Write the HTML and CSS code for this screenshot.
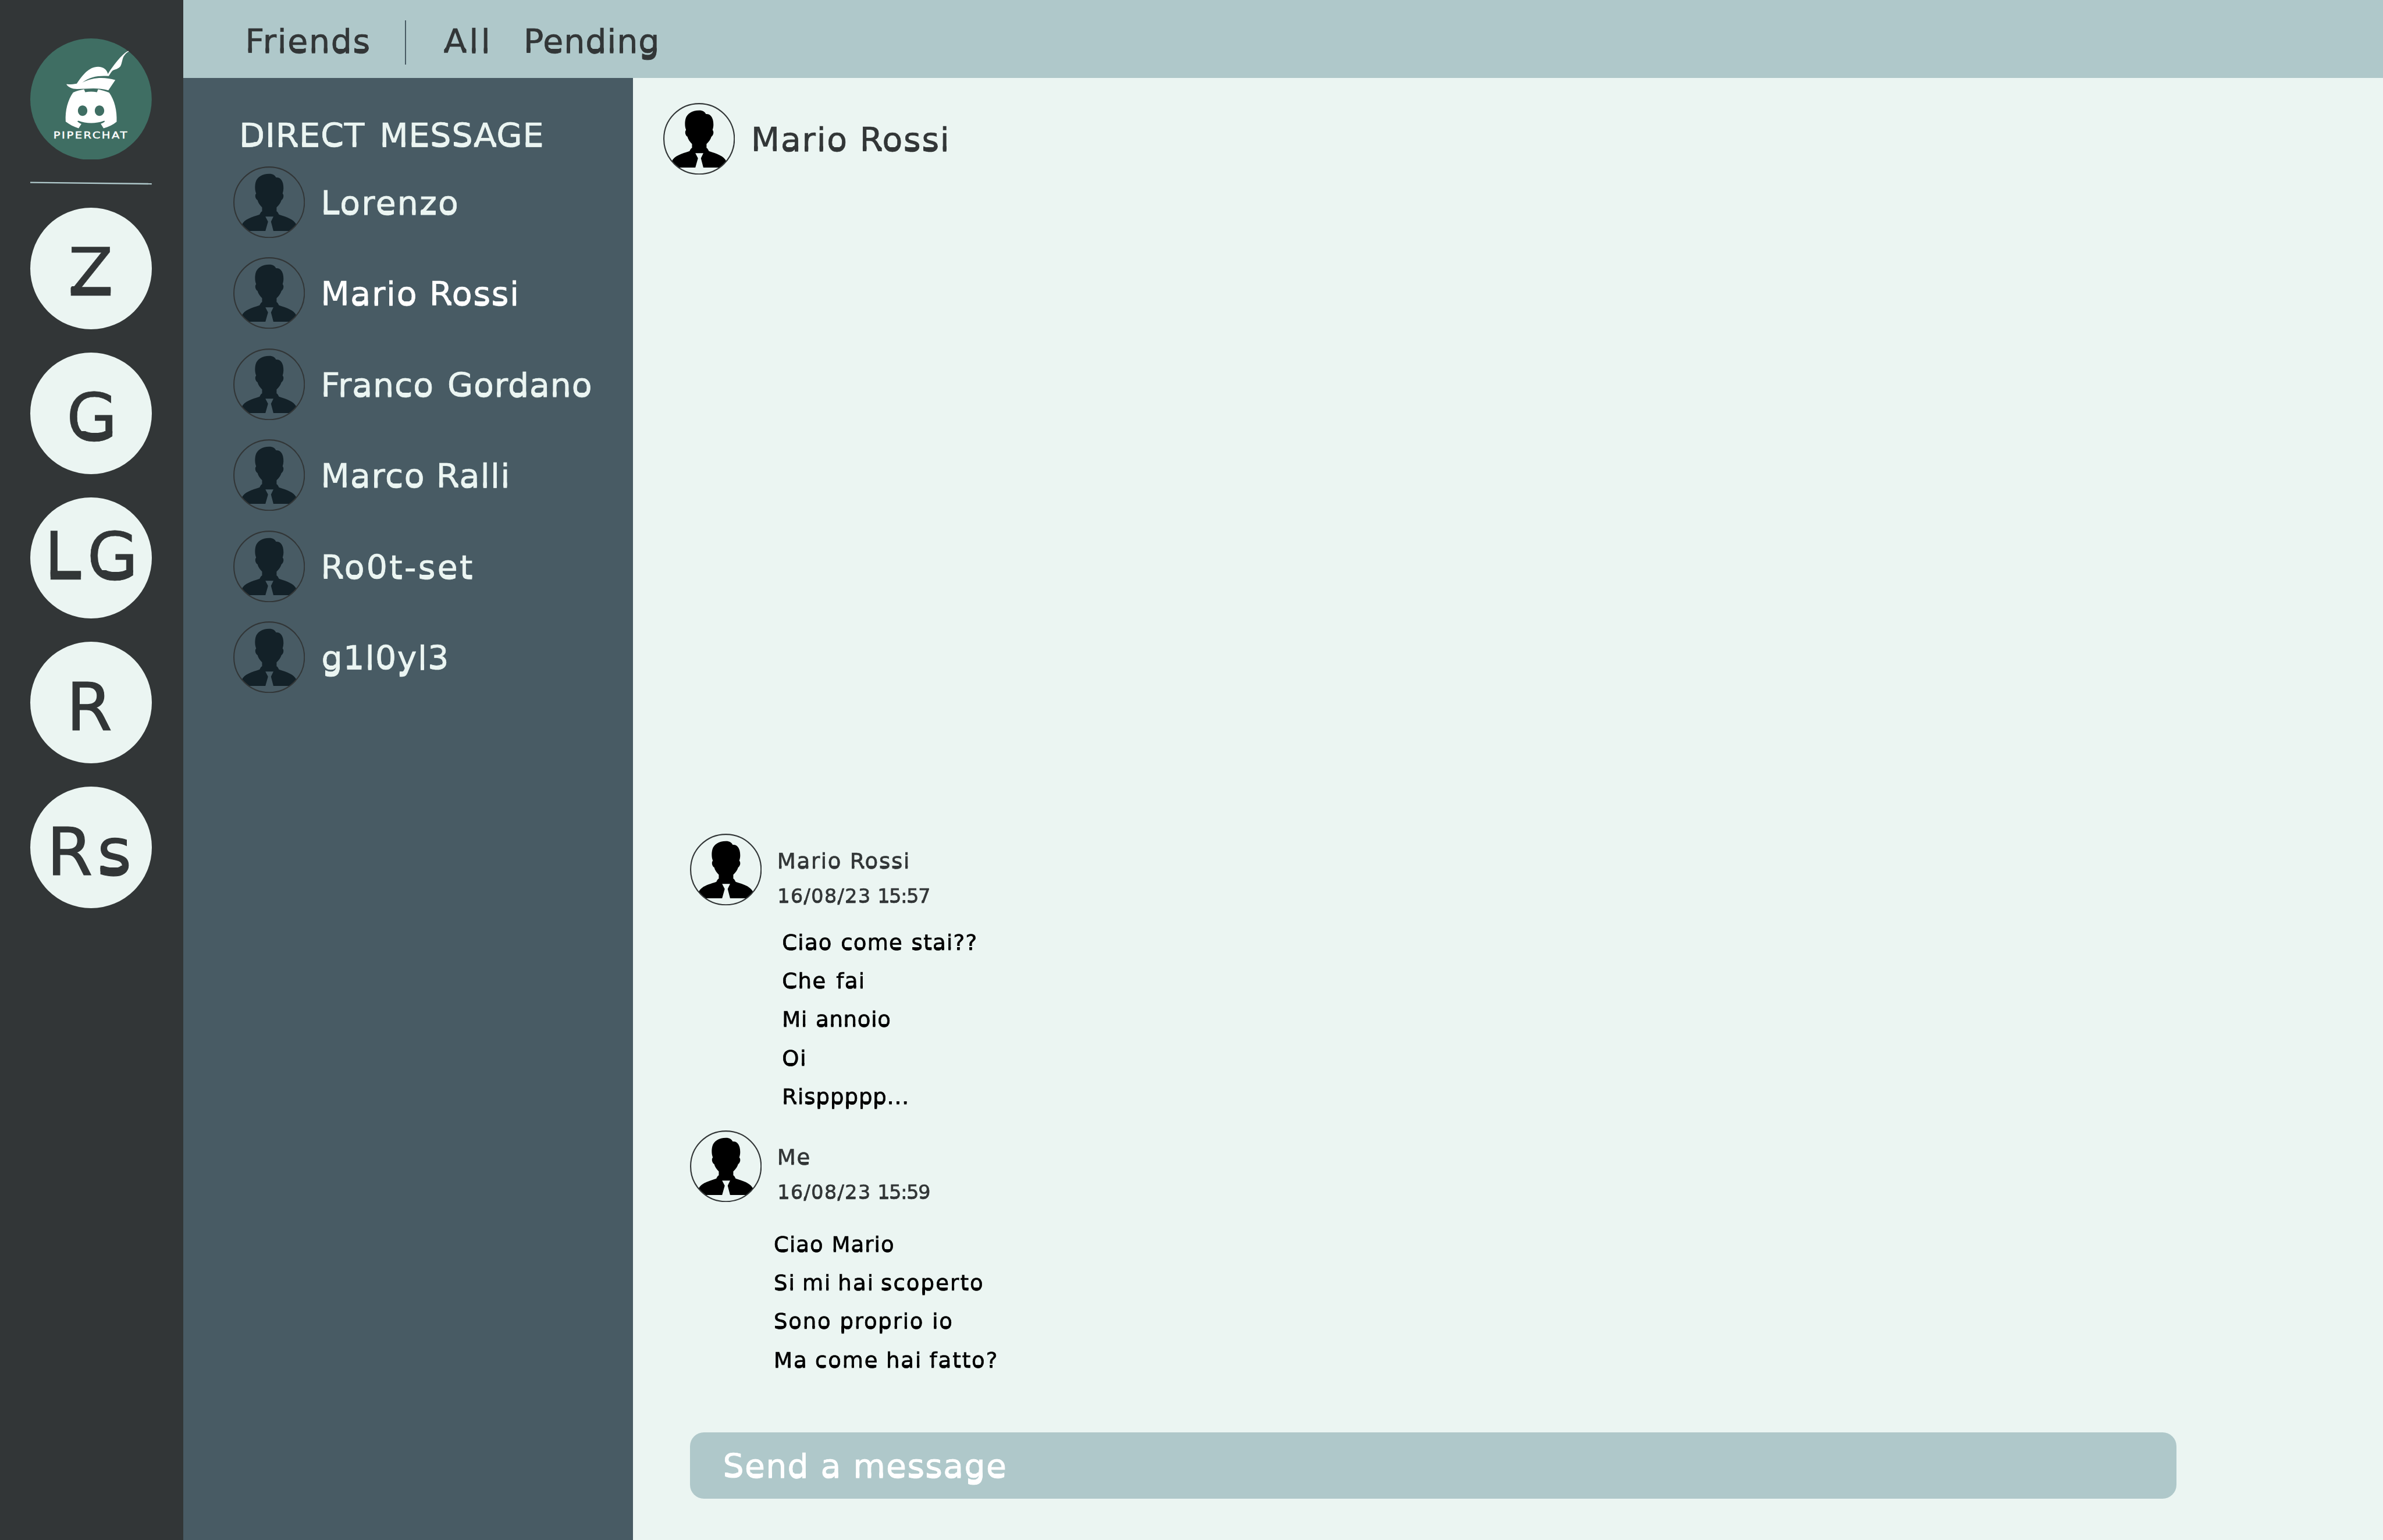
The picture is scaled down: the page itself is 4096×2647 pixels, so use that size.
FILE: index.html
```html
<!DOCTYPE html>
<html lang="it">
<head>
<meta charset="utf-8">
<title>PiperChat</title>
<link rel="stylesheet" href="styles.css">
</head>
<body>
<svg class="defs" aria-hidden="true">
  <defs>
    <!-- Thickens the strokes that sit on the baseline -->
    <filter id="heavy-base" primitiveUnits="objectBoundingBox" color-interpolation-filters="sRGB" x="-0.1" y="-0.2" width="1.2" height="1.4">
      <feOffset in="SourceGraphic" dx="0" dy="-0.035" x="-0.1" y="0.68" width="1.2" height="0.52" result="half"/>
      <feOffset in="SourceGraphic" dx="0" dy="-0.067" x="-0.1" y="0.7" width="1.2" height="0.5" result="base"/>
      <feMerge x="-0.1" y="-0.2" width="1.2" height="1.4">
        <feMergeNode in="half"/>
        <feMergeNode in="base"/>
        <feMergeNode in="SourceGraphic"/>
      </feMerge>
    </filter>
    <clipPath id="disc"><circle cx="72.25" cy="72.25" r="71"/></clipPath>
    <symbol id="person" viewBox="0 0 144.5 144.5">
      <path fill="currentColor" clip-path="url(#disc)" d="M72.3 15C80 15 84 18 86 22.300C94 21.500 98 27 100 34C101.600 41 101.600 48 99.300 54.500C102.500 57.500 101.500 65 97 68C95.500 73 92 78.500 87.200 82.500V90.500C89.500 91.500 90.500 94 92 97C108 102.500 122 106 127.500 118L113.500 130H80.800L75.900 111.300L80.800 101H64.700L70 111.300L64.700 130H32L17 118C22 106 37 102.500 53 97C54.500 94 55.500 91.500 58 90.500V82.500C53.500 78.500 50 73 48.800 68C44 65 43 57.500 46 54.500C43 47 43.500 38 45 32C48 21.500 58 15 72.300 15Z"/>
      <circle cx="72.25" cy="72.25" r="71" fill="none" stroke="#323637" stroke-width="2.5"/>
    </symbol>
  </defs>
</svg>
<div class="app">
  <nav class="rail">
    <svg class="logo" viewBox="183 231 734 734">
      <circle cx="550" cy="598" r="367" fill="#3f6e63"/>
      <g fill="#fff">
        <path d="M777 307C745 318 693 383 652 446C647 420 625 402 593 402C535 403 500 452 464 504C444 508 422 509 401 508C412 526 435 537 466 537C530 535 595 526 655 545L697 482C630 463 560 465 497 498C545 462 596 455 657 459C665 446 672 433 682 424C700 419 718 412 727 401C737 385 738 360 746 343C754 328 765 317 778 310Z"/>
        <path fill-rule="evenodd" d="M442 558C465 548 487 543 508 539L515 556C540 552 562 552 586 556L593 539C616 544 638 550 660 559C692 605 708 665 705 735C682 754 656 767 626 774L609 747C618 744 626 740 633 734V729H627C580 747 520 747 474 728L467 732C475 740 483 744 492 748L475 774C446 766 420 752 397 734C393 665 410 604 442 558ZM499 636C483 636 471 650 471 667.500S483 699 499 699S528 685 528 667.500S515 636 499 636ZM601 636C585 636 573 650 573 667.500S585 699 601 699S630 685 630 667.500S617 636 601 636Z"/>
        <text class="logo-word" transform="translate(323 836) scale(1.25 1)" textLength="356">PIPERCHAT</text>
      </g>
    </svg>
    <svg class="rail-line" viewBox="0 0 208.800 6"><path d="M0 1.600L208.800 4" stroke="#afc8ca" stroke-width="2.400"/></svg>
    <div class="servers">
      <a class="server z"><span class="text">Z</span></a>
      <a class="server g"><span class="text">G</span></a>
      <a class="server lg"><span class="text">LG</span></a>
      <a class="server r"><span class="text">R</span></a>
      <a class="server rs"><span class="text">R</span><span class="text small">s</span></a>
    </div>
  </nav>
  <div class="page">
    <header class="topbar">
      <span class="text friends">Friends</span>
      <span class="divider"></span>
      <span class="text all">All</span>
      <span class="text pending">Pending</span>
    </header>
    <div class="columns">
      <aside class="sidebar">
        <h2 class="text title">DIRECT MESSAGE</h2>
        <div class="people">
          <div class="person"><svg class="avatar"><use href="#person"/></svg><span class="text lorenzo">Lorenzo</span></div>
          <div class="person"><svg class="avatar"><use href="#person"/></svg><span class="text mario active">Mario Rossi</span></div>
          <div class="person"><svg class="avatar"><use href="#person"/></svg><span class="text franco">Franco Gordano</span></div>
          <div class="person"><svg class="avatar"><use href="#person"/></svg><span class="text marco">Marco Ralli</span></div>
          <div class="person"><svg class="avatar"><use href="#person"/></svg><span class="text root">Ro0t-set</span></div>
          <div class="person"><svg class="avatar"><use href="#person"/></svg><span class="text giloyi">g1l0yl3</span></div>
        </div>
      </aside>
      <main class="chat">
        <div class="person chat-head"><svg class="avatar"><use href="#person"/></svg><span class="text mario">Mario Rossi</span></div>
        <div class="thread">
          <article class="message theirs">
            <div class="message-head">
              <svg class="avatar"><use href="#person"/></svg>
              <div class="meta"><span class="text author">Mario Rossi</span><span class="text time">16/08/23 <span class="hour">15:57</span></span></div>
            </div>
            <div class="lines">
              <p class="text l1">Ciao come stai??</p>
              <p class="text l2">Che fai</p>
              <p class="text l3">Mi annoio</p>
              <p class="text l4">Oi</p>
              <p class="text l5">Risppppp...</p>
            </div>
          </article>
          <article class="message mine">
            <div class="message-head">
              <svg class="avatar"><use href="#person"/></svg>
              <div class="meta"><span class="text author">Me</span><span class="text time">16/08/23 <span class="hour">15:59</span></span></div>
            </div>
            <div class="lines">
              <p class="text l1">Ciao Mario</p>
              <p class="text l2">Si mi hai scoperto</p>
              <p class="text l3">Sono proprio io</p>
              <p class="text l4">Ma come hai fatto?</p>
            </div>
          </article>
        </div>
        <div class="composer"><span class="text">Send a message</span></div>
      </main>
    </div>
  </div>
</div>
</body>
</html>
```
FILE: styles.css
```css
* { box-sizing: border-box; }
body { margin: 0; font-family: "DejaVu Sans", sans-serif; font-size: 56.89px; color: #323637; }
.defs { position: absolute; width: 0; height: 0; }
.app { display: flex; width: 4096px; height: 2647px; overflow: hidden; }
.text { display: block; margin: 0; line-height: 1; font-weight: 400; white-space: nowrap; -webkit-text-stroke: 0.7px currentColor; filter: url(#heavy-base); }

.rail { flex: none; width: 315px; padding: 65.7px 0 0 52px; background: #323637; }
.logo { display: block; width: 208.8px; height: 208.8px; }
.logo-word { font-size: 55px; stroke: #fff; stroke-width: 1.5px; }
.rail-line { display: block; width: 208.8px; height: 6px; margin: 37.3px 0 39.3px; }
.servers { display: flex; flex-direction: column; gap: 40px; }
.server { display: flex; align-items: flex-start; width: 208.8px; height: 208.8px; padding-top: 55.4px; border-radius: 50%; background: #ebf5f2; font-size: 113.78px; }
.z { padding-left: 65.1px; }
.g { padding-left: 62px; }
.lg { padding: 45.8px 0 0 24px; letter-spacing: 10px; }
.r { padding-left: 61.9px; }
.rs { padding-left: 28.6px; letter-spacing: 7.4px; }
.r .text, .rs .text { filter: none; -webkit-text-stroke-width: 1.2px; }
.rs .small { filter: url(#heavy-base); }

.page { flex: 1; display: flex; flex-direction: column; }
.topbar { display: flex; align-items: flex-start; height: 134px; padding: 43.3px 0 0 106.6px; background: #afc8ca; }
.friends { letter-spacing: 1.65px; }
.divider { width: 2.4px; height: 76px; margin: -8.3px 64.7px 0 58.3px; background: #485b64; }
.all { letter-spacing: 4.5px; margin-right: 53px; }
.pending { letter-spacing: 0.98px; }

.columns { flex: 1; display: flex; }
.sidebar { flex: none; width: 773px; padding: 71.4px 0 0 85.7px; background: #485b64; color: #ebf5f2; }
.title { width: max-content; margin: 0 0 23.6px 10.5px; font-size: inherit; letter-spacing: 0.98px; word-spacing: 5.8px; }
.people { display: flex; flex-direction: column; gap: 33.14px; }
.person { display: flex; align-items: flex-start; gap: 27.5px; height: 123.3px; }
.person .text { margin-top: 35.2px; }
.avatar { flex: none; display: block; width: 123.3px; height: 123.3px; color: #000; }
.sidebar .avatar { color: #132128; }
.active { color: #fff; }
.lorenzo { letter-spacing: 2.18px; }
.mario { letter-spacing: 1.77px; word-spacing: 0; }
.franco { letter-spacing: 0.93px; word-spacing: 4px; }
.marco { letter-spacing: 1.5px; word-spacing: -1px; }
.root { letter-spacing: 3.3px; }
.giloyi { letter-spacing: 1.5px; margin-left: 1px; }

.chat { flex: 1; display: flex; flex-direction: column; padding: 42.6px 0 71px 52px; background: #ebf5f2; }
.chat-head { gap: 27.8px; }
.thread { flex: 1; display: flex; flex-direction: column; justify-content: flex-end; gap: 38.8px; padding: 0 0 105.2px 45.5px; }
.message-head { display: flex; gap: 27px; }
.meta { display: flex; flex-direction: column; align-items: flex-start; gap: 25px; height: 123.3px; padding-top: 28.3px; font-size: 37.1px; }
.author { letter-spacing: 1.7px; }
.time { margin-left: 0.5px; font-size: 33.28px; letter-spacing: 1.5px; word-spacing: -1.5px; }
.hour { letter-spacing: -1.2px; }
.lines { display: flex; flex-direction: column; align-items: flex-start; gap: 29.3px; margin-top: 44.8px; padding-left: 158.7px; color: #000; font-size: 37.1px; }
.mine .lines { margin-top: 54.3px; padding-left: 144.5px; }
.theirs .l1 { letter-spacing: 1.25px; word-spacing: 1.36px; }
.theirs .l2 { letter-spacing: 1.43px; word-spacing: 3.32px; }
.theirs .l3 { letter-spacing: 0.7px; word-spacing: 1.62px; }
.theirs .l4 { letter-spacing: 1.98px; }
.theirs .l5 { letter-spacing: 0.95px; }
.mine .l1 { letter-spacing: 1.06px; word-spacing: 0.76px; }
.mine .l2 { letter-spacing: 2.07px; word-spacing: -2.94px; }
.mine .l3 { letter-spacing: 1.76px; word-spacing: 0.45px; }
.mine .l4 { letter-spacing: 1.92px; word-spacing: -1.36px; }
.composer { display: flex; align-items: flex-start; width: 2555px; height: 114px; margin-left: 45.5px; padding: 30px 0 0 57px; border-radius: 24px; background: #afc8ca; color: #fff; letter-spacing: 1.31px; word-spacing: 0.24px; }
```
